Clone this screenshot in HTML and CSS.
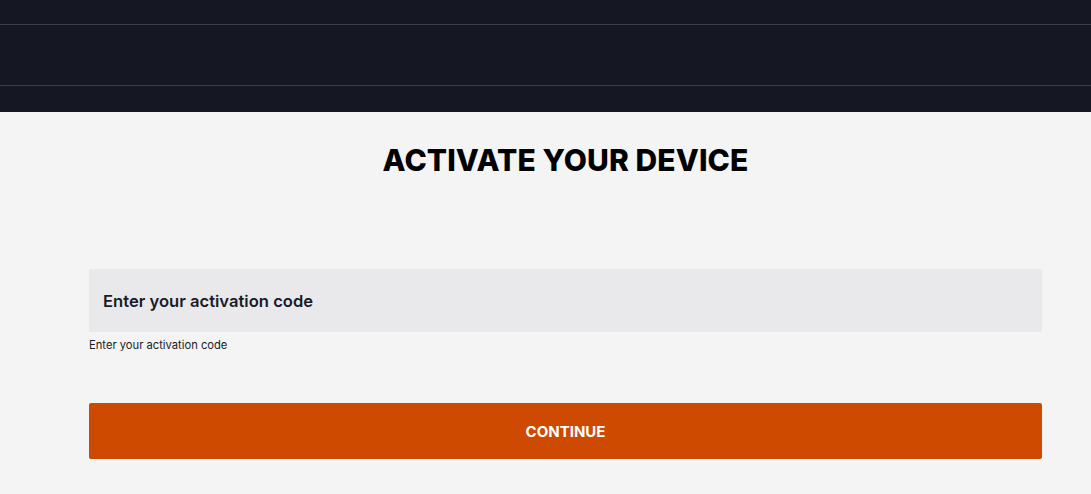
FILE: index.html
```html
<!DOCTYPE html>
<html lang="en">
<head>
<meta charset="utf-8">
<title>Activate your device</title>
<link rel="stylesheet" href="styles.css">
</head>
<body>
<header class="site-header">
  <div class="header-top"></div>
  <div class="header-main"></div>
  <div class="header-bottom"></div>
</header>
<main class="activate">
  <h1 class="activate-title">ACTIVATE YOUR DEVICE</h1>
  <form class="activate-form">
    <div class="field">
      <input class="field-input" type="text" placeholder="Enter your activation code">
      <p class="field-help">Enter your activation code</p>
    </div>
    <button class="btn-continue" type="button">CONTINUE</button>
  </form>
</main>
</body>
</html>
```
FILE: styles.css
```css
* { box-sizing: border-box; }
html, body { margin: 0; padding: 0; }
body {
  background: #f4f4f4;
  font-family: Inter, "Open Sans", "Liberation Sans", sans-serif;
  width: 1091px;
  height: 494px;
  overflow: hidden;
}
.site-header {
  background: #151823;
  height: 112px;
  display: flex;
  flex-direction: column;
}
.header-top {
  height: 25px;
  border-bottom: 1px solid #3d3e4a;
}
.header-main {
  height: 61px;
  border-bottom: 1px solid #3d3e4a;
}
.activate {
  padding: 0 49px 0 89px;
}
.activate-title {
  margin: 0;
  padding-top: 31px;
  height: 157px;
  text-align: center;
  font-size: 30px;
  font-weight: 800;
  letter-spacing: 0.1px;
  color: #000;
  line-height: 34px;
}
.activate-form {
  display: flex;
  flex-direction: column;
}
.field {
  display: flex;
  flex-direction: column;
}
.field-input {
  height: 63px;
  background: #e9e9eb;
  border: none;
  border-radius: 2px;
  padding: 0 14px;
  font-family: inherit;
  font-size: 16.6px;
  font-weight: 600;
  color: #1b1b25;
  outline: none;
}
.field-input::placeholder {
  color: #1b1b25;
  opacity: 1;
}
.field-help {
  margin: 7px 0 0;
  font-size: 11.2px;
  line-height: 13px;
  color: #1b1b25;
}
.btn-continue {
  margin-top: 51px;
  height: 56px;
  background: #cd4a00;
  border: none;
  border-radius: 2px;
  color: #fff;
  font-family: inherit;
  font-size: 15px;
  font-weight: 700;
  letter-spacing: 0;
  cursor: pointer;
}
```
